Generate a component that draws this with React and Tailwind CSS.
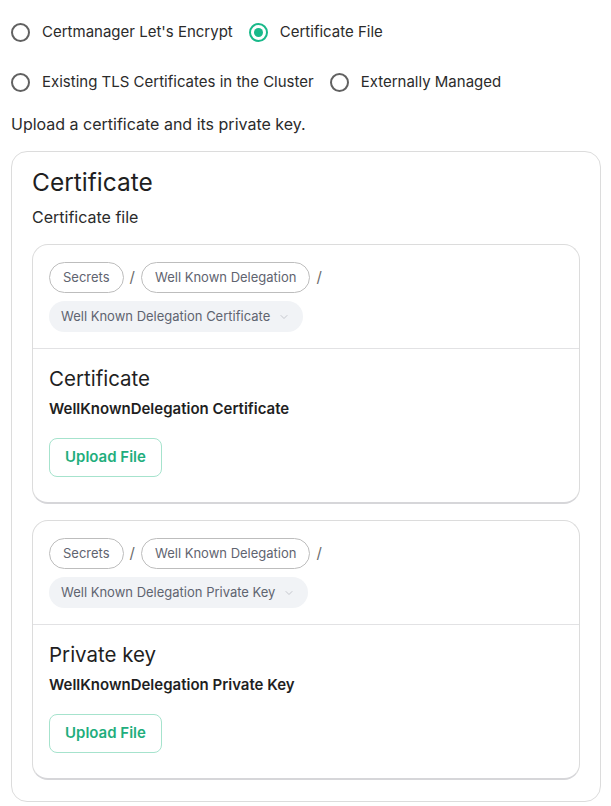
import { ChevronDown } from "lucide-react";

const Radio = ({ label, checked }) => (
  <label className="flex items-center gap-3 mr-4">
    <span
      className={
        "w-[19px] h-[19px] rounded-full border-2 flex items-center justify-center " +
        (checked ? "border-[#19b98a]" : "border-[#616161]")
      }
    >
      {checked && <span className="w-[9px] h-[9px] rounded-full bg-[#19b98a]" />}
    </span>
    <span className="text-[15px] text-[#2b2b2b]">{label}</span>
  </label>
);

const Pill = ({ children }) => (
  <span className="h-[31px] px-[13px] flex items-center rounded-full border border-[#bdbdbd] text-[13px] text-[#5f6470]">
    {children}
  </span>
);

const Sep = () => <span className="text-[15px] text-[#6b6b6b] px-[6px]">/</span>;

const FileCard = ({ selectLabel, title, name }) => (
  <div className="rounded-2xl border border-[#dcdcdc] border-b-[2px] border-b-[#d6d6d9]">
    <div className="px-4 pt-[17px] pb-[16px] border-b border-[#e2e2e4]">
      <div className="flex items-center">
        <Pill>Secrets</Pill>
        <Sep />
        <Pill>Well Known Delegation</Pill>
        <Sep />
      </div>
      <div className="flex mt-2">
        <span className="h-[31px] pl-3 pr-[13px] flex items-center gap-2 rounded-full bg-[#f1f3f6] text-[13px] text-[#5f6470]">
          {selectLabel}
          <ChevronDown size={12} strokeWidth={1.5} className="text-[#b5b8bf]" />
        </span>
      </div>
    </div>
    <div className="px-4 pt-[16px] pb-[25px]">
      <h3 className="text-[20.5px] text-[#1f1f1f] leading-7">{title}</h3>
      <p className="mt-[5px] text-[15px] font-semibold text-[#1f1f1f] leading-[21px]">{name}</p>
      <button className="mt-[19px] h-[39px] px-[15px] rounded-lg border border-[#a6e3cd] text-[15px] font-semibold text-[#1fae7d]">
        Upload File
      </button>
    </div>
  </div>
);

export default function App() {
  return (
    <div className="w-[611px] h-[806px] bg-white px-[11px] pt-[22px] font-['Inter',sans-serif]">
      <div className="flex items-center h-[20px]">
        <Radio label="Certmanager Let's Encrypt" />
        <Radio label="Certificate File" checked />
      </div>
      <div className="flex items-center h-[20px] mt-[30px]">
        <Radio label="Existing TLS Certificates in the Cluster" />
        <Radio label="Externally Managed" />
      </div>
      <p className="mt-[22px] text-[16px] text-[#2b2b2b] leading-5">
        Upload a certificate and its private key.
      </p>
      <div className="mt-[17px] w-[590px] rounded-2xl border border-[#dcdcdc] px-5 pt-[14px] pb-[21px]">
        <h2 className="text-[24.5px] text-[#1f1f1f] leading-8">Certificate</h2>
        <p className="mt-[9px] text-[16px] text-[#2b2b2b] leading-5">Certificate file</p>
        <div className="mt-[17px] flex flex-col gap-4">
          <FileCard
            selectLabel="Well Known Delegation Certificate"
            title="Certificate"
            name="WellKnownDelegation Certificate"
          />
          <FileCard
            selectLabel="Well Known Delegation Private Key"
            title="Private key"
            name="WellKnownDelegation Private Key"
          />
        </div>
      </div>
    </div>
  );
}
